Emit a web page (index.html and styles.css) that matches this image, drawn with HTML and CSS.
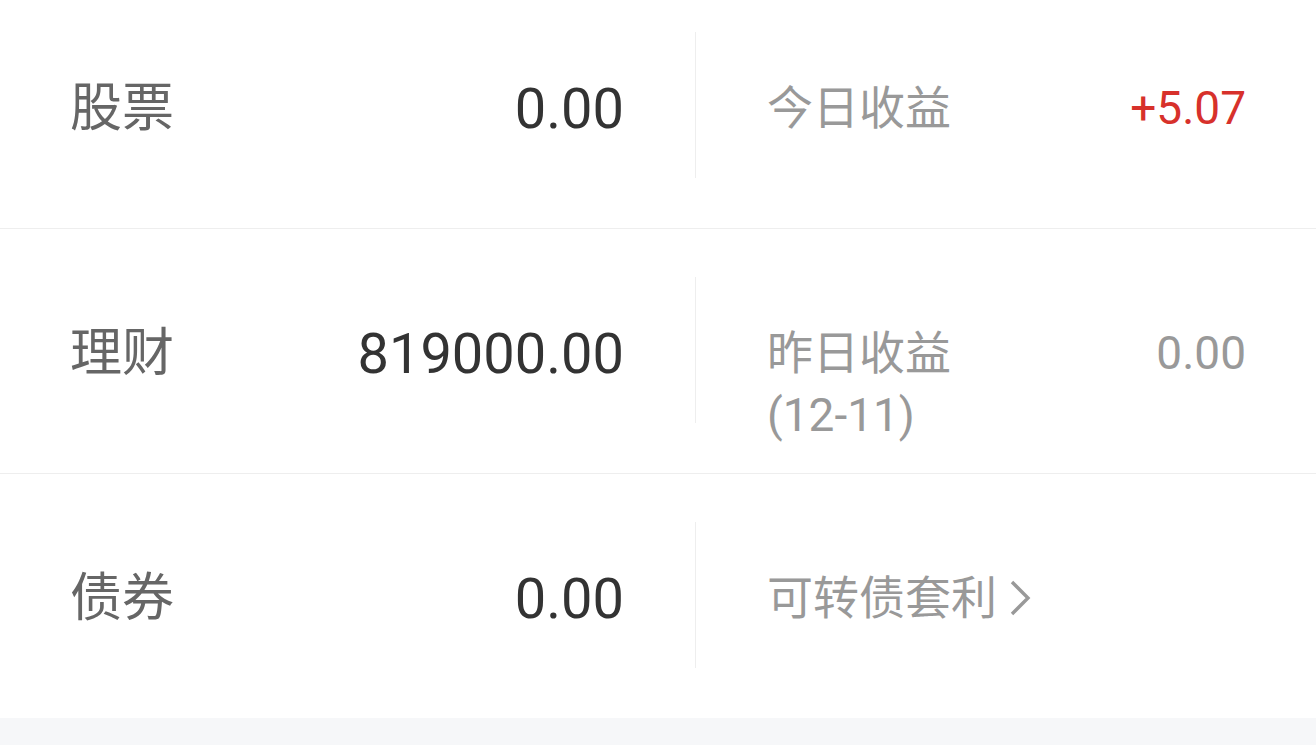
FILE: index.html
```html
<!DOCTYPE html>
<html lang="zh-CN">
<head>
<meta charset="utf-8">
<title>资产</title>
<link rel="stylesheet" href="styles.css">
</head>
<body>
<div class="list">
  <div class="row">
    <div class="cell-left">
      <span class="label">股票</span>
      <span class="value">0.00</span>
    </div>
    <div class="vdiv"></div>
    <div class="cell-right">
      <span class="sublabel">今日收益</span>
      <span class="subvalue red">+5.07</span>
    </div>
  </div>
  <div class="row">
    <div class="cell-left">
      <span class="label">理财</span>
      <span class="value">819000.00</span>
    </div>
    <div class="vdiv"></div>
    <div class="cell-right">
      <span class="sublabel">昨日收益(12-11)</span>
      <span class="subvalue">0.00</span>
    </div>
  </div>
  <div class="row last">
    <div class="cell-left">
      <span class="label">债券</span>
      <span class="value">0.00</span>
    </div>
    <div class="vdiv"></div>
    <div class="cell-right">
      <span class="link">可转债套利<svg class="chev" width="22" height="36" viewBox="0 0 22 36"><polyline points="3,2 19,18 3,34" fill="none" stroke="#999999" stroke-width="3.4" stroke-linecap="butt" stroke-linejoin="miter"/></svg></span>
    </div>
  </div>
</div>
<div class="strip"></div>
</body>
</html>
```

FILE: styles.css
```css
html, body {
  margin: 0;
  padding: 0;
  background: #ffffff;
  overflow: hidden;
}

body {
  width: 1316px;
  height: 745px;
  font-family: Roboto, "Noto Sans CJK SC", sans-serif;
}

.list {
  margin-top: -16px;
}

.row {
  display: flex;
  height: 244px;
  border-bottom: 1px solid #eeeeee;
}

.row.last {
  border-bottom: none;
}

.cell-left {
  width: 695px;
  box-sizing: border-box;
  padding: 93px 71px 0 70px;
  display: flex;
  align-items: flex-start;
  justify-content: space-between;
}

.label {
  font-size: 52px;
  line-height: 64px;
  color: #666666;
}

.value {
  font-size: 56px;
  line-height: 64px;
  color: #333333;
}

.vdiv {
  width: 1px;
  background: #eeeeee;
  margin: 48px 0 50px;
}

.cell-right {
  flex: 1;
  box-sizing: border-box;
  padding: 93px 70px 0 71px;
  display: flex;
  align-items: flex-start;
  justify-content: space-between;
}

.sublabel {
  font-size: 46px;
  line-height: 62px;
  color: #999999;
  max-width: 200px;
}

.subvalue {
  font-size: 46px;
  line-height: 62px;
  color: #999999;
}

.subvalue.red {
  color: #d7312b;
}

.link {
  display: flex;
  align-items: center;
  font-size: 46px;
  line-height: 62px;
  color: #999999;
}

.chev {
  margin-left: 12px;
  margin-top: 0;
}

.strip {
  height: 40px;
  background: #f6f7f9;
}
```
